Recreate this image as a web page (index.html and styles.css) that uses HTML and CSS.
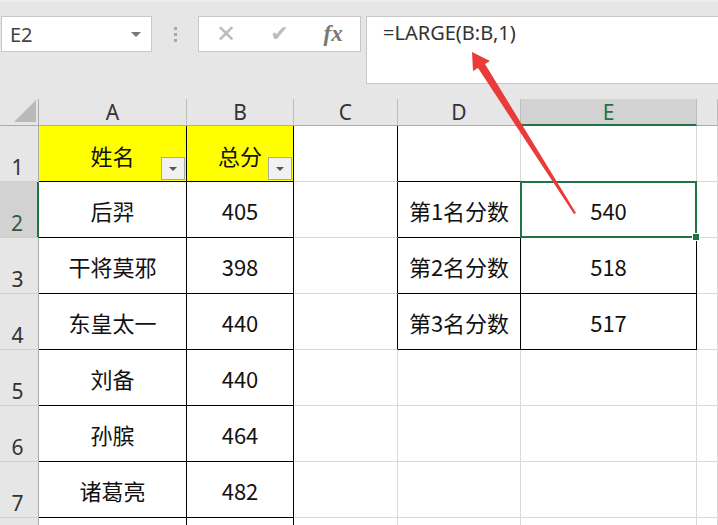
FILE: index.html
```html
<!DOCTYPE html>
<html>
<head>
    <meta charset="UTF-8">
    <link rel="stylesheet" href="styles.css">
</head>
<body>
    <div class="toolbar">
        <div class="name-box">
            <span class="name-text">E2</span>
            <span class="caret"></span>
        </div>
        <div class="grip">
            <span></span><span></span><span></span>
        </div>
        <div class="fx-box">
            <span class="fx-btn cancel">✕</span>
            <span class="fx-btn enter">✔</span>
            <span class="fx-btn fx">fx</span>
        </div>
        <div class="formula-bar">=LARGE(B:B,1)</div>
    </div>

    <div class="sheet">
        <!-- header row -->
        <div class="corner">
            <svg width="22" height="22" viewBox="0 0 22 22"><polygon points="22,0 22,22 0,22" fill="#b9b9b9"/></svg>
        </div>
        <div class="col-head">A</div>
        <div class="col-head">B</div>
        <div class="col-head">C</div>
        <div class="col-head">D</div>
        <div class="col-head active">E</div>
        <div class="col-head"></div>

        <!-- row 1 -->
        <div class="row-head">1</div>
        <div class="cell t t-yellow">姓名<span class="filter"></span></div>
        <div class="cell t t-yellow">总分<span class="filter"></span></div>
        <div class="cell edge-r"></div>
        <div class="cell edge-b"></div>
        <div class="cell edge-b"></div>
        <div class="cell"></div>

        <!-- row 2 -->
        <div class="row-head active">2</div>
        <div class="cell t">后羿</div>
        <div class="cell t">405</div>
        <div class="cell edge-r"></div>
        <div class="cell t">第1名分数</div>
        <div class="cell t selected">540<span class="handle"></span></div>
        <div class="cell"></div>

        <!-- row 3 -->
        <div class="row-head">3</div>
        <div class="cell t">干将莫邪</div>
        <div class="cell t">398</div>
        <div class="cell edge-r"></div>
        <div class="cell t">第2名分数</div>
        <div class="cell t">518</div>
        <div class="cell"></div>

        <!-- row 4 -->
        <div class="row-head">4</div>
        <div class="cell t">东皇太一</div>
        <div class="cell t">440</div>
        <div class="cell edge-r"></div>
        <div class="cell t">第3名分数</div>
        <div class="cell t">517</div>
        <div class="cell"></div>

        <!-- row 5 -->
        <div class="row-head">5</div>
        <div class="cell t">刘备</div>
        <div class="cell t">440</div>
        <div class="cell"></div>
        <div class="cell"></div>
        <div class="cell"></div>
        <div class="cell"></div>

        <!-- row 6 -->
        <div class="row-head">6</div>
        <div class="cell t">孙膑</div>
        <div class="cell t">464</div>
        <div class="cell"></div>
        <div class="cell"></div>
        <div class="cell"></div>
        <div class="cell"></div>

        <!-- row 7 -->
        <div class="row-head">7</div>
        <div class="cell t">诸葛亮</div>
        <div class="cell t">482</div>
        <div class="cell"></div>
        <div class="cell"></div>
        <div class="cell"></div>
        <div class="cell"></div>

        <!-- row 8 (cut off) -->
        <div class="row-head"></div>
        <div class="cell t"></div>
        <div class="cell t"></div>
        <div class="cell"></div>
        <div class="cell"></div>
        <div class="cell"></div>
        <div class="cell"></div>
    </div>

    <svg class="arrow" width="718" height="525" viewBox="0 0 718 525">
        <polygon points="472,52 490,61 485,64 576,213 574,214 478,68 473,71" fill="#ea3b3b"/>
    </svg>
</body>
</html>
```

FILE: styles.css
```css
body {
    margin: 0;
    width: 718px;
    height: 525px;
    overflow: hidden;
    position: relative;
    background-color: #ffffff;
    font-family: "Noto Sans CJK SC", "Liberation Sans", sans-serif;
    color: #111;
}

/* 编辑栏 */
.toolbar {
    display: flex;
    align-items: flex-start;
    height: 99px;
    padding-top: 16px;
    box-sizing: border-box;
    background-color: #e6e6e6;
    border-top: 2px solid #ededed;
}

.name-box {
    display: flex;
    align-items: center;
    justify-content: space-between;
    margin-left: 1px;
    width: 151px;
    height: 36px;
    box-sizing: border-box;
    margin-top: -2px;
    padding: 0 10px 0 8px;
    background: white;
    border: 1px solid #c8c8c8;
}

.name-text {
    font-family: "Noto Sans", "Liberation Sans", sans-serif;
    font-size: 20px;
    color: #444;
}

.caret {
    width: 0;
    height: 0;
    border-left: 5px solid transparent;
    border-right: 5px solid transparent;
    border-top: 5px solid #777;
}

.grip {
    width: 46px;
    height: 36px;
    margin-top: -2px;
    display: flex;
    flex-direction: column;
    align-items: center;
    justify-content: center;
    gap: 3px;
}

.grip span {
    width: 3px;
    height: 3px;
    background: #a8a8a8;
}

.fx-box {
    display: flex;
    align-items: center;
    width: 163px;
    height: 36px;
    margin-top: -2px;
    box-sizing: border-box;
    background: white;
    border: 1px solid #c8c8c8;
}

.fx-btn {
    width: 54px;
    text-align: center;
    color: #bcbcbc;
    font-size: 24px;
    line-height: 36px;
}

.fx-btn.cancel {
    font-family: "DejaVu Sans", sans-serif;
    font-weight: 300;
}

.fx-btn.enter {
    font-family: "DejaVu Sans", sans-serif;
    font-size: 22px;
}

.fx-btn.fx {
    font-family: "Liberation Serif", serif;
    font-style: italic;
    font-weight: bold;
    color: #777;
    font-size: 23px;
}

.formula-bar {
    margin-left: 5px;
    margin-top: -2px;
    flex: 1;
    height: 68px;
    box-sizing: border-box;
    padding: 2px 0 0 16px;
    background: white;
    border: 1px solid #c8c8c8;
    border-right: none;
    font-family: "Noto Sans", "Liberation Sans", sans-serif;
    font-size: 20px;
    color: #333;
}

/* 表格区域 */
.sheet {
    display: grid;
    grid-template-columns: 39px 148px 107px 104px 123px 176px 21px;
    grid-template-rows: 27px repeat(8, 56px);
}

.corner {
    display: flex;
    align-items: flex-end;
    justify-content: flex-end;
    padding: 0 2px 3px 0;
    background: #e6e6e6;
    border-right: 1px solid #ababab;
    border-bottom: 1px solid #ababab;
}

.col-head {
    display: flex;
    align-items: center;
    justify-content: center;
    background: #e6e6e6;
    border-right: 1px solid #bdbdbd;
    border-bottom: 1px solid #ababab;
    font-family: "Noto Sans", "Liberation Sans", sans-serif;
    font-size: 21px;
    color: #333;
    box-sizing: border-box;
}

.col-head.active {
    background: #d2d2d2;
    color: #217346;
    border-bottom: 2px solid #217346;
}

.row-head {
    display: flex;
    align-items: flex-end;
    justify-content: center;
    padding: 0 3px 0 0;
    background: #e6e6e6;
    border-right: 1px solid #ababab;
    border-bottom: 1px solid #cfcfcf;
    font-family: "Noto Sans", "Liberation Sans", sans-serif;
    font-size: 21px;
    color: #333;
    box-sizing: border-box;
}

.row-head.active {
    background: #d2d2d2;
    color: #2f5a45;
    border-right: 2px solid #217346;
}

.cell {
    position: relative;
    display: flex;
    align-items: center;
    justify-content: center;
    box-sizing: border-box;
    border-right: 1px solid #d9d9d9;
    border-bottom: 1px solid #d9d9d9;
    font-size: 22px;
    color: #111;
}

/* 黑色表格边框 */
.cell.t {
    border-right: 1px solid #000;
    border-bottom: 1px solid #000;
}

.cell.t-yellow {
    background: #ffff00;
    padding-top: 2px;
}

.cell.edge-r {
    border-right: 1px solid #000;
}

.cell.edge-b {
    border-bottom: 1px solid #000;
}

.filter {
    position: absolute;
    right: 1px;
    bottom: 1px;
    width: 24px;
    height: 23px;
    box-sizing: border-box;
    background: #f1f1f1;
    border: 1px solid #a9a9a9;
}

.filter:after {
    content: "";
    position: absolute;
    left: 7px;
    top: 9px;
    border-left: 4px solid transparent;
    border-right: 4px solid transparent;
    border-top: 4px solid #555;
}

.cell.selected:before {
    content: "";
    position: absolute;
    left: -1px;
    top: -1px;
    right: -1px;
    bottom: -1px;
    border: 2px solid #217346;
}

.handle {
    position: absolute;
    right: -4px;
    bottom: -4px;
    width: 6px;
    height: 6px;
    background: #217346;
    border: 1px solid #fff;
    z-index: 2;
}

.arrow {
    position: absolute;
    left: 0;
    top: 0;
    pointer-events: none;
}
```
